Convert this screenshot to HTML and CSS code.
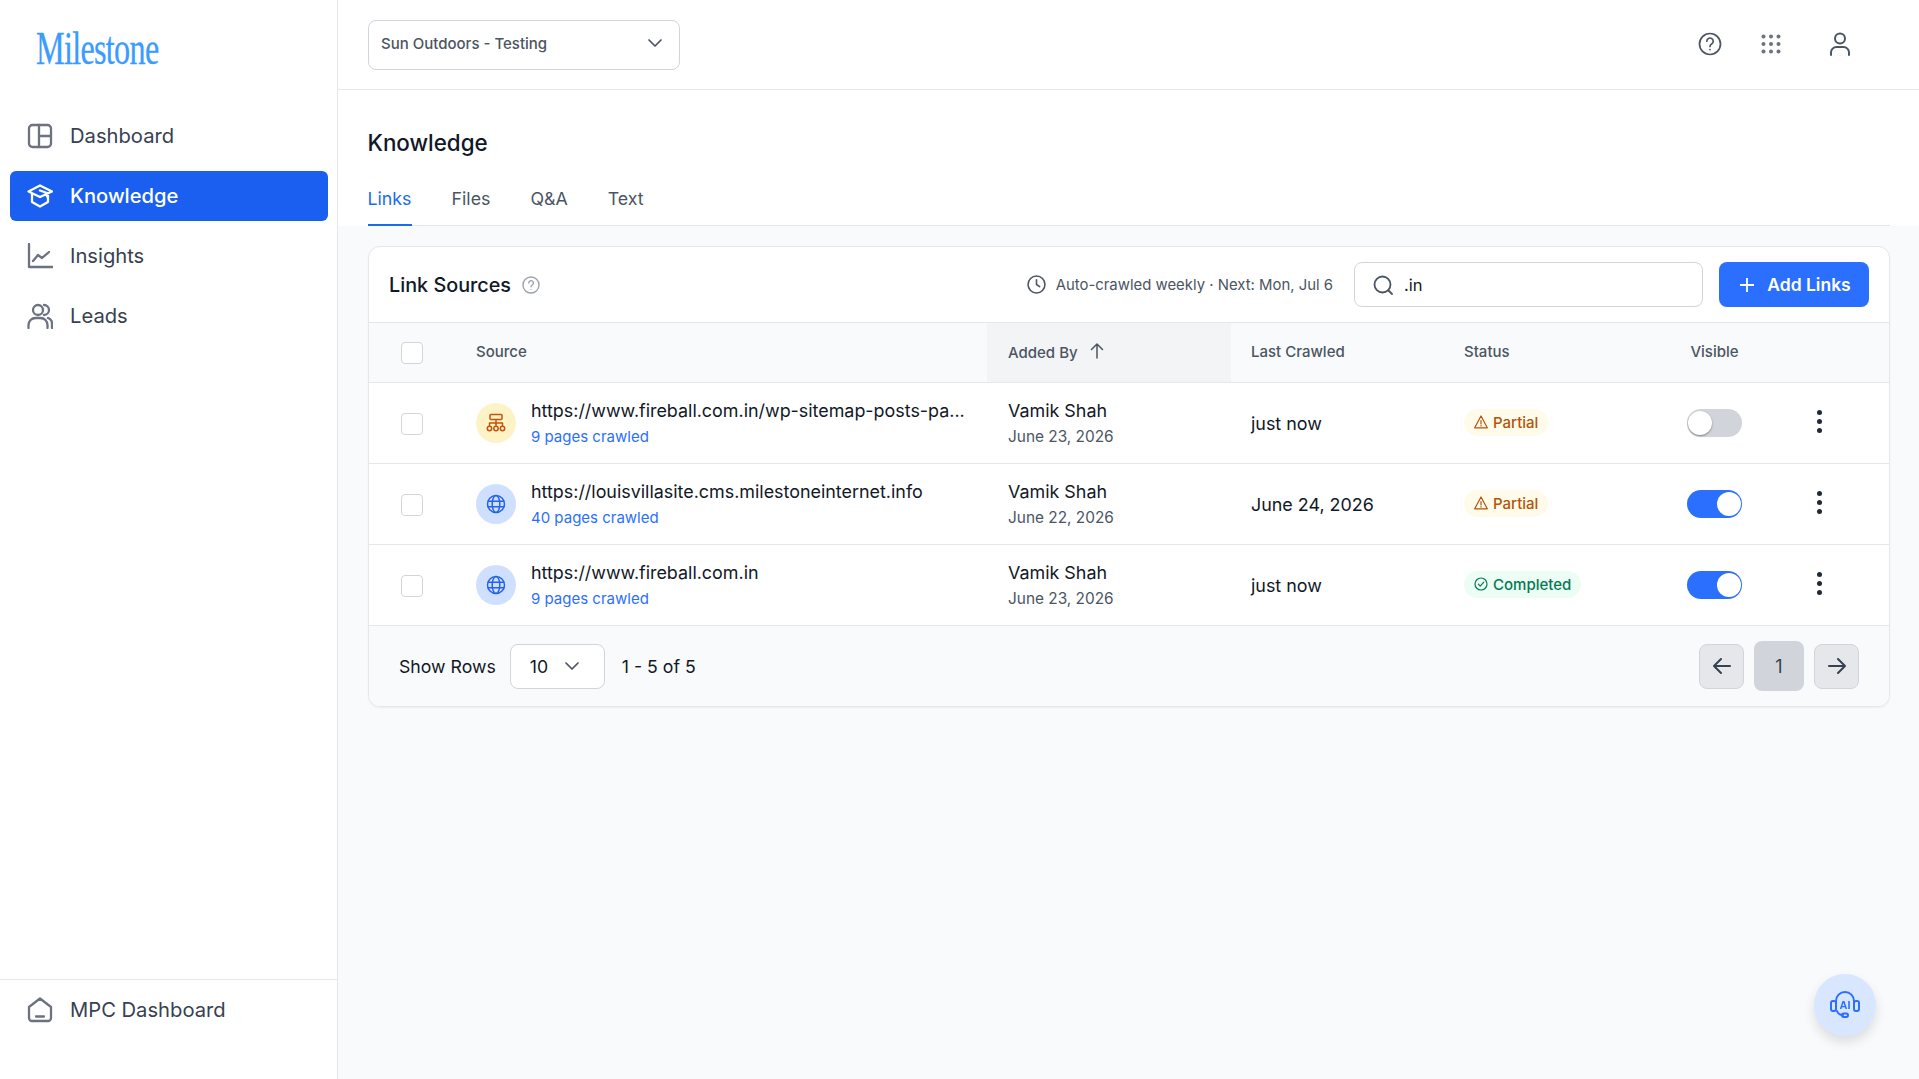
FILE: index.html
```html
<!DOCTYPE html>
<html lang="en">
<head>
    <meta charset="UTF-8">
    <meta name="viewport" content="width=device-width, initial-scale=1.0">
    <title>Knowledge</title>
    <link rel="stylesheet" href="styles.css">
</head>
<body>
    <div class="app">
        <aside class="sidebar">
            <div class="logo"><span class="logo-text">Milestone</span></div>
            <nav class="nav">
                <a class="nav-item">
                    <svg class="nav-icon" viewBox="0 0 26 26"><rect x="2" y="2" width="22" height="22" rx="3.5"/><path d="M12 2v22M12 13h12"/></svg>
                    Dashboard
                </a>
                <a class="nav-item active">
                    <svg class="nav-icon" viewBox="0 0 26 26"><path d="M13 2.5 25 8.5 13 14 1.5 8.5zM5 10.5v8.5l8 4.5 8-4.5v-8.5M13 7.5l7 2.5v3.500"/></svg>
                    Knowledge
                </a>
                <a class="nav-item">
                    <svg class="nav-icon" viewBox="0 0 26 26"><path d="M2 1v23h24M6 18l5-6 4 3 7-6"/></svg>
                    Insights
                </a>
                <a class="nav-item">
                    <svg class="nav-icon" viewBox="0 0 26 26"><circle cx="11" cy="7" r="5"/><path d="M1.500 25v-3a7 7 0 0 1 7-7h5a7 7 0 0 1 7 7v3M17 2a5 5 0 0 1 0 10M21 15a6 6 0 0 1 4 6v4"/></svg>
                    Leads
                </a>
            </nav>
            <div class="sidebar-foot">
                <a class="nav-item">
                    <svg class="nav-icon" viewBox="0 0 26 26"><path d="M13 1.500 24 10v11a3 3 0 0 1-3 3H5a3 3 0 0 1-3-3V10zM9 19.500h8"/></svg>
                    MPC Dashboard
                </a>
            </div>
        </aside>

        <div class="main">
            <header class="topbar">
                <div class="property-select">
                    <span>Sun Outdoors - Testing</span>
                    <svg class="chevron" viewBox="0 0 16 16"><path d="M2 5l6 6 6-6"/></svg>
                </div>
                <div class="top-icons">
                    <svg class="top-icon help" viewBox="0 0 24 24"><circle cx="12" cy="12" r="10.500"/><path d="M8.800 9.200a3.200 3.200 0 1 1 4.800 2.800c-1 .6-1.600 1.200-1.600 2.400"/><circle class="dot" cx="12" cy="17.600" r=".9"/></svg>
                    <svg class="top-icon grid-dots" viewBox="0 0 20 20">
                        <circle cx="2.500" cy="2.500" r="2"/><circle cx="10" cy="2.500" r="2"/><circle cx="17.500" cy="2.500" r="2"/>
                        <circle cx="2.500" cy="10" r="2"/><circle cx="10" cy="10" r="2"/><circle cx="17.500" cy="10" r="2"/>
                        <circle cx="2.500" cy="17.500" r="2"/><circle cx="10" cy="17.500" r="2"/><circle cx="17.500" cy="17.500" r="2"/>
                    </svg>
                    <svg class="top-icon user" viewBox="0 0 22 24"><circle cx="11" cy="6.500" r="5"/><path d="M2 23v-2.500a5.500 5.500 0 0 1 5.500-5.500h7a5.500 5.500 0 0 1 5.500 5.500V23"/></svg>
                </div>
            </header>

            <section class="page-head">
                <h1>Knowledge</h1>
                <div class="tabs">
                    <a class="tab active">Links</a>
                    <a class="tab">Files</a>
                    <a class="tab">Q&amp;A</a>
                    <a class="tab">Text</a>
                </div>
            </section>

            <section class="content">
                <div class="card">
                    <div class="card-head">
                        <h2>Link Sources</h2>
                        <svg class="info-icon" viewBox="0 0 18 18"><circle cx="9" cy="9" r="8"/><path d="M6.800 7a2.300 2.300 0 1 1 3.400 2c-.8.500-1.200.9-1.200 1.800"/><circle class="dot" cx="9" cy="13.300" r=".6"/></svg>
                        <div class="crawl-note">
                            <svg class="clock" viewBox="0 0 18 18"><circle cx="9" cy="9" r="8"/><path d="M9 4.500V9l3 2"/></svg>
                            <span>Auto-crawled weekly · Next: Mon, Jul 6</span>
                        </div>
                        <div class="search">
                            <svg class="search-icon" viewBox="0 0 20 20"><circle cx="9.500" cy="9.500" r="8"/><path d="M15.500 15.500 19 19"/></svg>
                            <span>.in</span>
                        </div>
                        <button class="add-btn">
                            <svg viewBox="0 0 14 14"><path d="M7 0v14M0 7h14"/></svg>
                            Add Links
                        </button>
                    </div>

                    <table class="links">
                        <colgroup>
                            <col class="c-check"><col class="c-source"><col class="c-added"><col class="c-crawled"><col class="c-status"><col class="c-visible"><col class="c-actions">
                        </colgroup>
                        <thead>
                            <tr>
                                <th><span class="check"></span></th>
                                <th>Source</th>
                                <th class="sorted">Added By
                                    <svg class="sort" viewBox="0 0 14 16"><path d="M7 15V1M1.500 6.500 7 1l5.500 5.500"/></svg>
                                </th>
                                <th>Last Crawled</th>
                                <th>Status</th>
                                <th class="center">Visible</th>
                                <th></th>
                            </tr>
                        </thead>
                        <tbody>
                            <tr>
                                <td><span class="check"></span></td>
                                <td>
                                    <div class="source">
                                        <span class="source-icon amber">
                                            <svg viewBox="0 0 20 20"><rect x="4" y="1.500" width="12" height="5" rx="1"/><path d="M10 6.500v6M3.500 12.500v-2.500h13v2.500"/><circle cx="3.500" cy="15.500" r="2.200"/><circle cx="10" cy="15.500" r="2.200"/><circle cx="16.500" cy="15.500" r="2.200"/></svg>
                                        </span>
                                        <div>
                                            <div class="url">https://www.fireball.com.in/wp-sitemap-posts-pa...</div>
                                            <div class="pages">9 pages crawled</div>
                                        </div>
                                    </div>
                                </td>
                                <td class="added"><div class="name">Vamik Shah</div><div class="date">June 23, 2026</div></td>
                                <td class="crawled">just now</td>
                                <td><span class="badge partial"><svg viewBox="0 0 14 14"><path d="M7 1 13.300 12.800H.7zM7 5.500v3.500M7 10.500v.6"/></svg>Partial</span></td>
                                <td class="center"><span class="toggle"></span></td>
                                <td><span class="kebab"><i></i><i></i><i></i></span></td>
                            </tr>
                            <tr>
                                <td><span class="check"></span></td>
                                <td>
                                    <div class="source">
                                        <span class="source-icon blue">
                                            <svg viewBox="0 0 20 20"><circle cx="10" cy="10" r="8.500"/><ellipse cx="10" cy="10" rx="3.800" ry="8.500"/><path d="M2 7.300h16M2 12.700h16"/></svg>
                                        </span>
                                        <div>
                                            <div class="url">https://louisvillasite.cms.milestoneinternet.info</div>
                                            <div class="pages">40 pages crawled</div>
                                        </div>
                                    </div>
                                </td>
                                <td class="added"><div class="name">Vamik Shah</div><div class="date">June 22, 2026</div></td>
                                <td class="crawled">June 24, 2026</td>
                                <td><span class="badge partial"><svg viewBox="0 0 14 14"><path d="M7 1 13.300 12.800H.7zM7 5.500v3.500M7 10.500v.6"/></svg>Partial</span></td>
                                <td class="center"><span class="toggle on"></span></td>
                                <td><span class="kebab"><i></i><i></i><i></i></span></td>
                            </tr>
                            <tr>
                                <td><span class="check"></span></td>
                                <td>
                                    <div class="source">
                                        <span class="source-icon blue">
                                            <svg viewBox="0 0 20 20"><circle cx="10" cy="10" r="8.500"/><ellipse cx="10" cy="10" rx="3.800" ry="8.500"/><path d="M2 7.300h16M2 12.700h16"/></svg>
                                        </span>
                                        <div>
                                            <div class="url">https://www.fireball.com.in</div>
                                            <div class="pages">9 pages crawled</div>
                                        </div>
                                    </div>
                                </td>
                                <td class="added"><div class="name">Vamik Shah</div><div class="date">June 23, 2026</div></td>
                                <td class="crawled">just now</td>
                                <td><span class="badge completed"><svg viewBox="0 0 14 14"><circle cx="7" cy="7" r="6"/><path d="M4.300 7.200 6.200 9.100 9.800 5.200"/></svg>Completed</span></td>
                                <td class="center"><span class="toggle on"></span></td>
                                <td><span class="kebab"><i></i><i></i><i></i></span></td>
                            </tr>
                        </tbody>
                    </table>

                    <div class="card-foot">
                        <span>Show Rows</span>
                        <div class="rows-select">
                            <span>10</span>
                            <svg class="chevron" viewBox="0 0 16 16"><path d="M2 5l6 6 6-6"/></svg>
                        </div>
                        <span>1 - 5 of 5</span>
                        <div class="pager">
                            <button class="page-btn"><svg viewBox="0 0 18 18"><path d="M17 9H1M8 2 1 9l7 7"/></svg></button>
                            <button class="page-btn current">1</button>
                            <button class="page-btn"><svg viewBox="0 0 18 18"><path d="M1 9h16M10 2l7 7-7 7"/></svg></button>
                        </div>
                    </div>
                </div>
            </section>
        </div>
    </div>

    <button class="ai-btn">
        <svg viewBox="0 0 32 32">
            <path class="ai-line" d="M7 13v-1a9 9 0 0 1 18 0v1"/>
            <rect class="ai-line" x="2" y="12" width="5" height="10" rx="2"/>
            <rect class="ai-line" x="25" y="12" width="5" height="10" rx="2"/>
            <path class="ai-line" d="M8 22c1 3 3 4 6 4"/>
            <rect class="ai-line" x="13" y="24.500" width="6" height="3.500" rx="1.750"/>
            <text x="16" y="20" text-anchor="middle" class="ai-text">AI</text>
        </svg>
    </button>
</body>
</html>
```

FILE: styles.css
```css
* {
    box-sizing: border-box;
}
html, body {
    margin: 0;
    height: 100%;
}
body {
    font-family: Inter, "Noto Sans", sans-serif;
    color: #111827;
    background: #f9fafb;
    overflow: hidden;
}
svg {
    display: block;
    fill: none;
    stroke: currentColor;
    stroke-linecap: round;
    stroke-linejoin: round;
}
.dot {
    fill: currentColor;
    stroke: none;
}
.app {
    display: flex;
    height: 100vh;
}

/* sidebar */
.sidebar {
    width: 338px;
    flex: none;
    display: flex;
    flex-direction: column;
    background: #fff;
    border-right: 1px solid #e5e7eb;
}
.logo {
    height: 111px;
    padding: 26px 0 0 36px;
}
.logo-text {
    display: inline-block;
    font-family: "Liberation Serif", serif;
    font-size: 46px;
    line-height: 46px;
    letter-spacing: -1px;
    color: #3b9bff;
    -webkit-text-stroke: 0.3px #3b9bff;
    transform: scaleX(0.7);
    transform-origin: left center;
}
.nav {
    flex: 1;
    display: flex;
    flex-direction: column;
    gap: 10px;
    padding: 0 9px 0 10px;
}
.nav-item {
    display: flex;
    align-items: center;
    gap: 17px;
    height: 50px;
    padding: 0 0 2px 17px;
    border-radius: 6px;
    font-size: 20.200px;
    color: #374151;
}
.nav-item.active {
    background: #1a5ff0;
    color: #fff;
    font-weight: 500;
}
.nav-icon {
    width: 26px;
    height: 26px;
    flex: none;
    margin-top: 2px;
    stroke: #6b7280;
    stroke-width: 2.300;
}
.active .nav-icon {
    stroke: #fff;
}
.sidebar-foot {
    height: 100px;
    padding: 5px 9px 0 10px;
    border-top: 1px solid #e5e7eb;
}

/* main column */
.main {
    flex: 1;
    min-width: 0;
    display: flex;
    flex-direction: column;
}
.topbar {
    height: 90px;
    flex: none;
    display: flex;
    align-items: flex-start;
    justify-content: space-between;
    padding: 20px 0 0 30px;
    background: #fff;
    border-bottom: 1px solid #e5e7eb;
}
.property-select {
    width: 312px;
    height: 50px;
    display: flex;
    align-items: center;
    justify-content: space-between;
    padding: 0 16px 4px 12px;
    border: 1px solid #d1d5db;
    border-radius: 8px;
    font-size: 15px;
    font-weight: 500;
    color: #4b5563;
}
.chevron {
    width: 16px;
    height: 16px;
    color: #4b5563;
    stroke-width: 1.700;
}
.top-icons {
    display: flex;
    align-items: center;
    padding-top: 12px;
    padding-right: 68px;
    color: #4b5563;
}
.top-icon.help {
    width: 24px;
    height: 24px;
    stroke-width: 1.700;
}
.top-icon.grid-dots {
    width: 20px;
    height: 20px;
    margin-left: 39px;
    fill: #6b7280;
    stroke: none;
}
.top-icon.user {
    width: 22px;
    height: 24px;
    margin-left: 48px;
    stroke-width: 2;
}
.page-head {
    flex: none;
    height: 136px;
    padding: 0 29px 0 29.500px;
    background: #fff;
}
.page-head h1 {
    margin: 0;
    padding-top: 38px;
    font-size: 22.400px;
    line-height: 30px;
    font-weight: 500;
}
.tabs {
    display: flex;
    gap: 40px;
    margin-top: 26px;
    height: 42px;
    border-bottom: 1px solid #e5e7eb;
}
.tab {
    height: 42px;
    padding-top: 3px;
    font-size: 17.800px;
    line-height: 24px;
    color: #4b5563;
}
.tab.active {
    color: #1a6bf0;
    border-bottom: 2px solid #1a6bf0;
}
.content {
    flex: 1;
    padding: 20px 29px 0 30px;
}

/* card */
.card {
    background: #fff;
    border: 1px solid #e5e7eb;
    border-radius: 12px;
    overflow: hidden;
    box-shadow: 0 1px 2px rgba(0, 0, 0, 0.05);
}
.card-head {
    height: 75px;
    display: flex;
    align-items: center;
    padding: 0 20px;
}
.card-head h2 {
    margin: 0;
    font-size: 19.800px;
    font-weight: 500;
}
.info-icon {
    width: 18px;
    height: 18px;
    margin-left: 11px;
    color: #9ca3af;
    stroke-width: 1.400;
}
.crawl-note {
    margin-left: auto;
    display: flex;
    align-items: center;
    gap: 10px;
    font-size: 14.900px;
    color: #4b5563;
}
.clock {
    width: 19px;
    height: 19px;
    stroke-width: 1.500;
}
.search {
    width: 349px;
    height: 45px;
    margin-left: 21px;
    display: flex;
    align-items: center;
    gap: 11px;
    padding-left: 18px;
    border: 1px solid #d1d5db;
    border-radius: 8px;
    font-size: 16.500px;
}
.search-icon {
    width: 20px;
    height: 20px;
    color: #4b5563;
    stroke-width: 1.800;
}
.add-btn {
    width: 150px;
    height: 45px;
    margin-left: 16px;
    display: flex;
    align-items: center;
    justify-content: center;
    gap: 13px;
    padding: 0 0 0 3px;
    border: none;
    border-radius: 8px;
    background: #2b6fff;
    color: #fff;
    font-family: inherit;
    font-size: 17.500px;
    font-weight: 600;
}
.add-btn svg {
    width: 14px;
    height: 14px;
    stroke-width: 1.800;
}

/* table */
.links {
    width: 100%;
    border-collapse: collapse;
    table-layout: fixed;
}
.c-check { width: 87px; }
.c-source { width: 531px; }
.c-added { width: 244px; }
.c-crawled { width: 213px; }
.c-status { width: 216px; }
.c-visible { width: 109px; }
.links th {
    height: 60px;
    padding: 0 0 3px 20px;
    text-align: left;
    font-size: 15px;
    font-weight: 500;
    color: #4b5563;
    background: #f9fafb;
    border-top: 1px solid #e5e7eb;
    border-bottom: 1px solid #e5e7eb;
}
.links th:first-child, .links td:first-child {
    padding-left: 32px;
}
.links th:first-child {
    padding-bottom: 0;
}
.links th.center, .links td.center {
    padding-left: 0;
    text-align: center;
}
.links th.sorted {
    background: #f3f4f6;
    padding-left: 21px;
    padding-bottom: 1px;
}
.sort {
    display: inline-block;
    width: 14px;
    height: 16px;
    margin-left: 8px;
    vertical-align: -1px;
    stroke-width: 1.500;
}
.links td {
    height: 81px;
    padding: 0 0 0 20px;
    border-bottom: 1px solid #e5e7eb;
    vertical-align: middle;
}
.links td:first-child, .links td.crawled {
    padding-top: 1px;
}
.links td.added {
    padding-left: 21px;
}
.check {
    display: block;
    width: 22px;
    height: 22px;
    background: #fff;
    border: 1px solid #d1d5db;
    border-radius: 4px;
}
.source {
    display: flex;
    align-items: center;
    gap: 15px;
}
.source-icon {
    width: 40px;
    height: 40px;
    flex: none;
    display: flex;
    align-items: center;
    justify-content: center;
    border-radius: 50%;
}
.source-icon svg {
    width: 20px;
    height: 20px;
    stroke-width: 1.500;
}
.source-icon.amber {
    background: #fef3c7;
    color: #c2540a;
}
.source-icon.blue {
    background: #cfe0ff;
    color: #2563eb;
}
.url, .name, .crawled {
    font-size: 17.900px;
    line-height: 26px;
    color: #111827;
}
.pages, .date {
    margin-top: 2px;
    font-size: 15px;
    line-height: 22px;
}
.pages {
    color: #2b6fff;
}
.date {
    font-size: 15.400px;
    color: #4b5563;
}
.badge {
    display: flex;
    width: fit-content;
    align-items: center;
    gap: 5px;
    height: 27px;
    margin-top: -2px;
    padding: 0 10px;
    border-radius: 14px;
    font-size: 15px;
    font-weight: 500;
}
.badge svg {
    width: 14px;
    height: 14px;
    stroke-width: 1.200;
}
.partial {
    background: #fffbeb;
    color: #b45309;
}
.completed {
    background: #ecfdf3;
    color: #047857;
}
.toggle {
    display: inline-block;
    vertical-align: middle;
    position: relative;
    width: 55px;
    height: 28px;
    border-radius: 14px;
    background: #d1d5db;
}
.toggle::after {
    content: "";
    position: absolute;
    top: 2px;
    left: 1px;
    width: 24px;
    height: 24px;
    border-radius: 50%;
    background: #fff;
    box-shadow: 0 1px 2px rgba(0, 0, 0, 0.4);
}
.toggle.on {
    background: #2b6fff;
}
.toggle.on::after {
    left: 30px;
    box-shadow: none;
}
.kebab {
    display: flex;
    flex-direction: column;
    gap: 4px;
    margin: -3px 0 0 28px;
    width: 5px;
}
.kebab i {
    display: block;
    width: 5px;
    height: 5px;
    border-radius: 50%;
    background: #1f2937;
}
.card-foot {
    height: 80px;
    display: flex;
    align-items: center;
    padding: 0 30px;
    background: #f9fafb;
    font-size: 17.700px;
    color: #111827;
}
.rows-select {
    width: 95px;
    height: 45px;
    margin: 0 17px 0 14px;
    display: flex;
    align-items: center;
    justify-content: space-between;
    padding: 0 24px 0 19px;
    background: #fff;
    border: 1px solid #d1d5db;
    border-radius: 8px;
}
.pager {
    margin-left: auto;
    display: flex;
    align-items: center;
    gap: 10px;
}
.page-btn {
    width: 45px;
    height: 45px;
    display: flex;
    align-items: center;
    justify-content: center;
    background: #e5e7eb;
    border: 1px solid #d1d5db;
    border-radius: 8px;
    color: #374151;
    font-family: inherit;
    font-size: 18px;
}
.page-btn svg {
    width: 18px;
    height: 18px;
    stroke-width: 2;
}
.page-btn.current {
    width: 50px;
    height: 50px;
    background: #d1d5db;
    border: none;
}

/* floating assistant button */
.ai-btn {
    position: fixed;
    left: 1814px;
    top: 974px;
    width: 62px;
    height: 62px;
    display: flex;
    align-items: center;
    justify-content: center;
    padding: 0;
    border: none;
    border-radius: 50%;
    background: #d8e6ff;
    box-shadow: 0 6px 12px rgba(0, 0, 0, 0.12);
}
.ai-btn svg {
    width: 32px;
    height: 32px;
    color: #2b6fff;
}
.ai-line {
    stroke-width: 2;
}
.ai-text {
    fill: #2b6fff;
    stroke: none;
    font-size: 11px;
    font-weight: 700;
}
```
